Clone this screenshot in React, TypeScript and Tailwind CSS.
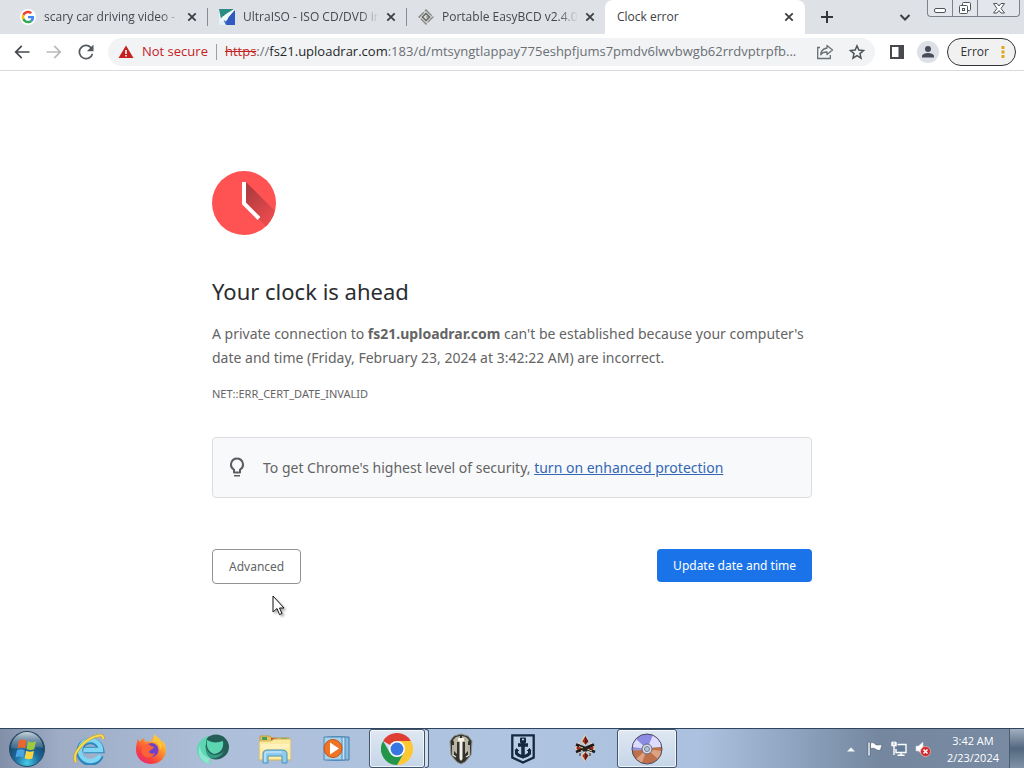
import type { ReactNode } from "react";

function GoogleG() {
  return (
    <svg viewBox="0 0 48 48" className="size-4 shrink-0">
      <circle cx="24" cy="24" r="24" fill="#fff" />
      <g transform="translate(5 5) scale(.79)">
        <path fill="#EA4335" d="M24 9.500c3.540 0 6.710 1.220 9.210 3.600l6.850-6.850C35.900 2.380 30.470 0 24 0 14.620 0 6.510 5.380 2.560 13.220l7.980 6.190C12.430 13.720 17.740 9.500 24 9.500z" />
        <path fill="#4285F4" d="M46.980 24.550c0-1.570-.15-3.090-.38-4.550H24v9.020h12.940c-.58 2.960-2.260 5.480-4.780 7.180l7.730 6c4.510-4.180 7.090-10.360 7.090-17.650z" />
        <path fill="#FBBC05" d="M10.530 28.590A14.500 14.500 0 0 1 9.770 24c0-1.600.27-3.140.76-4.590l-7.980-6.190A23.900 23.900 0 0 0 0 24c0 3.880.92 7.540 2.560 10.780l7.970-6.190z" />
        <path fill="#34A853" d="M24 48c6.480 0 11.930-2.130 15.890-5.810l-7.730-6c-2.150 1.450-4.920 2.300-8.160 2.300-6.260 0-11.570-4.220-13.470-9.910l-7.980 6.190C6.510 42.620 14.620 48 24 48z" />
      </g>
    </svg>
  );
}

function UltraIsoIcon() {
  return (
    <svg viewBox="0 0 16 16" className="size-4 shrink-0">
      <path d="M0 0h16v16H0z" fill="#e3f1f4" />
      <path d="M0 0h15L7 5 2 10z" fill="#2b8b85" />
      <path d="M16 1v15H7L5 12z" fill="#3159b8" />
      <path d="M16 0 9 9l-1 7-3-6-5 3 3-5z" fill="#f2fbfc" />
      <path d="M16 2 10 9l-4 4 2 3h8z" fill="#2f5bc0" />
    </svg>
  );
}

function EasyBcdIcon() {
  return (
    <svg viewBox="0 0 16 16" className="size-4 shrink-0" fill="none">
      <path d="M8 1 15 8 8 15 1 8z" fill="#cfd0cf" stroke="#858785" strokeWidth="1.300" strokeDasharray="8 1.500" />
      <path d="m8 4.500 3.500 3.500L8 11.500 4.500 8z" fill="#e2e2e2" stroke="#666966" strokeWidth="1.500" />
      <path d="M8 8h3" stroke="#777" />
    </svg>
  );
}

function CloseIcon() {
  return (
    <svg viewBox="0 0 16 16" className="size-4" stroke="#3c4043" strokeWidth="1.800">
      <path d="m4.300 4.300 7.400 7.400M11.700 4.300l-7.400 7.400" />
    </svg>
  );
}

function Tab({ icon, title, active }: { icon?: ReactNode; title: string; active?: boolean }) {
  return (
    <div
      role="tab"
      aria-selected={!!active}
      className={
        active
          ? "relative flex h-full w-[200px] min-w-0 items-center rounded-t-lg bg-white pr-2 pl-3"
          : "relative flex h-full w-[199px] min-w-0 items-center gap-2 pr-[7px] pl-3"
      }
    >
      {icon}
      <span
        className={
          active
            ? "min-w-0 flex-1 overflow-hidden whitespace-nowrap text-[#3c4043]"
            : "min-w-0 flex-1 overflow-hidden whitespace-nowrap text-[#45494d] [mask-image:linear-gradient(to_right,#000_86%,transparent)]"
        }
      >
        {title}
      </span>
      <button aria-label={`Close ${title}`} className="-ml-1 shrink-0">
        <CloseIcon />
      </button>
    </div>
  );
}

const Separator = () => <span className="-mr-px h-[18px] w-px shrink-0 bg-[#888d94]" />;

function TabStrip() {
  return (
    <header className="flex h-[34px] shrink-0 items-center bg-[#dee1e6] pl-2 text-[12px]">
      <div role="tablist" className="flex h-full min-w-0 items-center">
        <Tab icon={<GoogleG />} title="scary car driving video - Google Search" />
        <Separator />
        <Tab icon={<UltraIsoIcon />} title="UltraISO - ISO CD/DVD image creator" />
        <Separator />
        <Tab icon={<EasyBcdIcon />} title="Portable EasyBCD v2.4.0.237" />
        <Tab title="Clock error" active />
      </div>
      <button aria-label="New tab" className="ml-3.5 shrink-0">
        <svg viewBox="0 0 16 16" className="size-4" stroke="#33373b" strokeWidth="2">
          <path d="M8 2v12M2 8h12" />
        </svg>
      </button>
      <button aria-label="Search tabs" className="mr-3.5 ml-auto shrink-0">
        <svg viewBox="0 0 16 16" className="size-4" fill="none" stroke="#3c4043" strokeWidth="2">
          <path d="m3.500 6 4.500 4.500L12.500 6" />
        </svg>
      </button>
      <div className="mr-1 flex h-[17px] shrink-0 self-start divide-x divide-[#7c828b] overflow-hidden rounded-b border border-t-0 border-[#7c828b] bg-[#e3e6eb]">
        <button aria-label="Minimize" className="flex w-[25px] items-center justify-center">
          <svg viewBox="0 0 14 14" className="size-3.5" fill="#fff" stroke="#50555c">
            <rect x="1.500" y="7.500" width="11" height="4" rx="1.500" />
          </svg>
        </button>
        <button aria-label="Restore" className="flex w-[25px] items-center justify-center">
          <svg viewBox="0 0 14 14" className="size-3.5" fill="#fff" stroke="#50555c">
            <rect x="4.500" y="1.500" width="8" height="8" rx="1" />
            <rect x="1.500" y="4.500" width="8" height="8" rx="1" />
            <rect x="4.500" y="7.500" width="2" height="2" />
          </svg>
        </button>
        <button aria-label="Close" className="flex w-[41px] items-center justify-center">
          <svg viewBox="0 0 14 14" className="size-3.5" fill="#fff" stroke="#50555c">
            <path d="M1.500 2.500h3.500l2 2.500 2-2.500h3.500L9 7.500l3.500 4.500H9L7 9.500 5 12H1.500L5 7.500z" />
          </svg>
        </button>
      </div>
    </header>
  );
}

function ToolIcon({ d, label, color = "#55595e" }: { d: string; label: string; color?: string }) {
  return (
    <button aria-label={label} className="shrink-0">
      <svg viewBox="0 0 24 24" className="size-5" fill={color}>
        <path d={d} />
      </svg>
    </button>
  );
}

function Toolbar() {
  return (
    <nav className="flex h-[37px] shrink-0 items-center gap-3 border-b border-[#d9dadd] bg-white pr-2 pl-3">
      <ToolIcon label="Back" color="#45494d" d="M21 11H6.830l5.590-5.590L11 4l-8 8 8 8 1.410-1.410L6.830 13H21z" />
      <ToolIcon label="Forward" color="#b9babc" d="M3 11h14.170l-5.590-5.590L13 4l8 8-8 8-1.410-1.410L17.170 13H3z" />
      <ToolIcon label="Reload" d="M18.400 5.600A9 9 0 1 0 20.800 14h-2.150A6.900 6.900 0 1 1 16.900 7.100L13 11h8V3z" />
      <div className="flex h-7 min-w-0 flex-1 items-center rounded-full bg-[#f1f3f4] pr-2 pl-2.5 text-[13px]">
        <button className="flex shrink-0 items-center gap-2 text-[#c5221f]">
          <svg viewBox="0 0 16 16" className="size-4">
            <path d="M8 1.500 15.500 14H.5z" fill="#c5221f" />
            <path d="M8 6v4M8 11v1.500" stroke="#fff" strokeWidth="1.600" />
          </svg>
          Not secure
        </button>
        <span className="mx-2 h-4 w-px shrink-0 bg-[#9aa0a6]" />
        <span className="min-w-0 flex-1 overflow-hidden whitespace-nowrap text-[#6b6f74]">
          <span className="text-[#c5221f] line-through">https</span>://
          <span className="text-[#25282b]">fs21.uploadrar.com</span>
          :183/d/mtsyngtlappay775eshpfjums7pmdv6lwvbwgb62rrdvptrpfb...
        </span>
        <div className="ml-2 flex shrink-0 gap-3">
          <button aria-label="Share">
            <svg viewBox="0 0 20 20" className="size-5" fill="none" stroke="#6b6f74" strokeWidth="1.300">
              <path d="M5 5.500H2.700v11h12.600V13" />
              <path d="M12 3.500 17.500 8 12 12.500V10c-3 0-5 .7-6.300 2.800C6 9 8.500 6.500 12 6z" strokeLinejoin="round" />
            </svg>
          </button>
          <button aria-label="Bookmark">
            <svg viewBox="0 0 20 20" className="size-5" fill="none" stroke="#4f5358" strokeWidth="1.500">
              <path d="m10 3.800 1.850 4.300 4.650.4-3.530 3.070 1.060 4.550L10 13.700l-4.030 2.420 1.060-4.550L3.500 8.500l4.650-.4z" />
            </svg>
          </button>
        </div>
      </div>
      <button aria-label="Side panel" className="shrink-0">
        <svg viewBox="0 0 20 20" className="size-5">
          <path d="M3 3h14v14H3z" fill="#46494d" />
          <path d="M5 5h6.500v10H5z" fill="#fff" />
        </svg>
      </button>
      <button aria-label="Profile" className="-mx-0.5 shrink-0">
        <svg viewBox="0 0 22 22" className="size-[22px]">
          <circle cx="11" cy="11" r="11" fill="#dde0e6" />
          <circle cx="11" cy="8" r="3" fill="#474c57" />
          <path d="M5 16.500v-1.300C5 12.800 8.500 12 11 12s6 .8 6 3.200v1.300z" fill="#474c57" />
        </svg>
      </button>
      <button className="-ml-0.5 flex h-7 shrink-0 items-center gap-1.5 rounded-full border border-[#303336] bg-[#f1f1f1] pr-1 pl-3 text-[12px] text-[#303336]">
        Error
        <svg viewBox="0 0 16 16" className="size-4" fill="#e2a51e">
          <path d="M6.500 2h3v3h-3zM6.500 6.500h3v3h-3zM6.500 11h3v3h-3z" />
        </svg>
      </button>
    </nav>
  );
}

function ClockErrorPage() {
  return (
    <main className="min-h-0 flex-1 bg-white px-6 pt-[100px] text-[#646464]">
      <div className="relative mx-auto max-w-[600px] font-['Noto_Sans','Open_Sans',sans-serif]">
        <svg viewBox="0 0 64 64" className="size-16">
          <defs>
            <clipPath id="face">
              <circle cx="32" cy="32" r="32" />
            </clipPath>
            <linearGradient id="shade" gradientUnits="userSpaceOnUse" x1="34" y1="24" x2="58" y2="52">
              <stop offset="0" stopColor="#b33c40" />
              <stop offset="1" stopColor="#ee4c4e" />
            </linearGradient>
          </defs>
          <circle cx="32" cy="32" r="32" fill="#ff5252" />
          <path d="M34 11 68 45 58 60 46 47 34 34z" fill="url(#shade)" clipPath="url(#face)" />
          <path d="M32 11v21.500l15 15" fill="none" stroke="#fff" strokeWidth="4" />
        </svg>
        <h1 className="mt-[42px] text-[22px] leading-7 text-[#2b2d30]">Your clock is ahead</h1>
        <p className="mt-[17px] text-[14px] leading-6">
          A private connection to <strong className="font-bold">fs21.uploadrar.com</strong> can't be established because your computer's
          date and time (Friday, February 23, 2024 at 3:42:22 AM) are incorrect.
        </p>
        <p className="mt-4 text-[11px] leading-4">NET::ERR_CERT_DATE_INVALID</p>
        <div className="mt-[35px] flex items-center gap-3.5 rounded border border-[#dadce0] bg-[#f8f9fb] px-3 py-[17px] text-[14px] leading-[25px]">
          <svg viewBox="0 0 24 24" className="size-6 shrink-0" fill="#5b5f64">
            <path d="M9 19h6v1.600H9zM12 1.500a7 7 0 0 0-4 12.740V16.500a1 1 0 0 0 1 1h6a1 1 0 0 0 1-1v-2.260A7 7 0 0 0 12 1.500zm2.850 11.100-.85.600V15.500h-4v-2.300l-.85-.6a5 5 0 1 1 5.700 0z" />
          </svg>
          <p>
            To get Chrome's highest level of security,{" "}
            <a href="#protection" className="text-[#3367b5] underline">
              turn on enhanced protection
            </a>
          </p>
        </div>
        <div className="mt-[51px] flex items-start justify-between text-[12px]">
          <button className="h-[35px] rounded border border-[#909296] px-4">Advanced</button>
          <button className="h-[33px] rounded bg-[#1a73e8] px-4 text-white">Update date and time</button>
        </div>
        <svg viewBox="0 0 14 21" className="absolute top-[424px] left-[60px] h-[21px] w-3.5 drop-shadow-[2px_2px_1px_rgba(0,0,0,0.3)]">
          <path d="M1 1v16l4-3.500 2.500 6 2.500-1-2.500-5.500H12z" fill="#fff" stroke="#111" />
        </svg>
      </div>
    </main>
  );
}

function StartOrb() {
  return (
    <svg viewBox="0 0 38 38" className="size-[38px]">
      <defs>
        <radialGradient id="orb" cx=".5" cy=".9" r=".8">
          <stop offset="0" stopColor="#43cde8" />
          <stop offset=".45" stopColor="#1d689b" />
          <stop offset="1" stopColor="#173857" />
        </radialGradient>
        <linearGradient id="gloss" x1="0" y1="0" x2="0" y2="1">
          <stop offset="0" stopColor="#e8f0f4" stopOpacity=".85" />
          <stop offset="1" stopColor="#8fb1c5" stopOpacity=".25" />
        </linearGradient>
      </defs>
      <circle cx="19" cy="19" r="17.500" fill="url(#orb)" stroke="#274b68" />
      <path d="M3 18a16 16 0 0 1 32 0c-9-3-21 3-32 0z" fill="url(#gloss)" />
      <path d="M11 10.500c3-1.500 5-1.300 7.500 0L17 18.500c-3-1.300-5-1.300-7.500-.2z" fill="#ec652c" />
      <path d="M20 11.300c2.500 1.300 5 1.200 8 0l-1.700 8c-3 1.200-5.300 1-7.800-.2z" fill="#9fc93c" />
      <path d="M9 20c3-1.200 5-1 7.700.2l-1.500 7.300c-2.600-1.200-4.700-1.200-7.700 0z" fill="#4ba5e5" />
      <path d="M18.200 20.800c2.600 1.200 4.800 1.300 7.800.2l-1.600 7.500c-3 1.200-5.100 1-7.800-.3z" fill="#fbd343" />
    </svg>
  );
}

function ExplorerE() {
  return (
    <svg viewBox="0 0 32 32" className="size-8" fill="none">
      <path d="M27.500 22.500A10.800 10.800 0 1 1 28 17H11" stroke="#2b86be" strokeWidth="6.500" />
      <path d="M27 22A10.500 10.500 0 1 1 28 17H11" stroke="#7fd5f3" strokeWidth="4.500" />
      <path d="M3 29C-2 21 12 5 26 2.500c3-.5 4.500.5 4 3.500" stroke="#c89a24" strokeWidth="3" />
      <path d="M3 29C-2 21 12 5 26 2.500c3-.5 4.500.5 4 3.500" stroke="#fae04f" strokeWidth="1.800" />
    </svg>
  );
}

function Firefox() {
  return (
    <svg viewBox="0 0 32 32" className="size-8">
      <defs>
        <linearGradient id="fox" x1="1" y1="0" x2=".2" y2="1">
          <stop offset="0" stopColor="#fff34f" />
          <stop offset=".4" stopColor="#ff9a2b" />
          <stop offset=".75" stopColor="#f9433b" />
          <stop offset="1" stopColor="#e8267e" />
        </linearGradient>
      </defs>
      <path d="M20 1c1 3 5 4 7 8l1-1c2 3 3 6 3 9a15 14 0 0 1-30 0c0-5 1-8 2-11l2 3c1-2 2-3 4-4l1 4c2-1 4-1 6 0 1-2 2-5 4-8z" fill="url(#fox)" />
      <circle cx="16.500" cy="17" r="7" fill="#7041c9" />
      <path d="M8 13c3-3 6-2 8 0l3 1c-1 3-4 2-5 5 1 2 4 2 6 1-1 4-7 6-11 3-3-3-3-7-1-10z" fill="#fb6237" />
      <path d="M17 9c5-1 8 3 8 8l2-4c-1-5-4-8-7-10-1 3-2 4-3 6z" fill="#ffc53a" />
    </svg>
  );
}

function TealSwirl() {
  return (
    <svg viewBox="0 0 32 32" className="size-8">
      <ellipse cx="19" cy="14" rx="13" ry="12.500" fill="#245f57" />
      <path d="M11 3C1 6-3 17 2 24c3 5 8 7 13 7-3-2-4-4-2-6-4-4-5-10-4-14 0-3 1-6 2-8z" fill="#5fd6b3" />
      <path d="M10 7c5 3 10 3 16 1 1 7-2 12-9 13C11 19 9 13 10 7z" fill="#5bd6b0" />
      <path d="M9 13c1 5 3 8 8 9 5 0 8-2 10-4-3 6-8 8-14 7-3-3-4-7-4-12z" fill="#349c83" />
      <path d="M3 12c0 7 4 12 10 13-2 2-2 4 1 6C4 30-1 21 3 12z" fill="#8ce5cd" />
    </svg>
  );
}

function FolderIcon() {
  return (
    <svg viewBox="0 0 32 32" className="size-8">
      <path d="M1 6V3h10l2 2h17v20H1z" fill="#e5c55c" stroke="#b99d45" />
      <path d="M3 4h5v3H3zM22 5h6v4h-6z" fill="#4a9c65" />
      <path d="M12 5h6v4h-6z" fill="#c6503b" />
      <path d="M0 8h12l3-2h17v21H0z" fill="#fbeaa0" stroke="#d3b453" />
      <path d="M2 11h28v5H2z" fill="#fff3bb" />
      <path d="M4 30V21c0-3 2-4 5-4h14c3 0 5 1 5 4v9h-5v-7H9v7z" fill="#8fcbed" stroke="#4a93bd" />
      <path d="M6 29v-8c0-2 1-2 3-2h14" fill="none" stroke="#d3f1ff" />
    </svg>
  );
}

function MediaPlayer() {
  return (
    <svg viewBox="0 0 32 32" className="size-8">
      <path d="M10 4h18v23H10z" fill="#8abbe0" stroke="#3e7cab" />
      <path d="M6 4h18v23H6z" fill="#c5e3f6" stroke="#4a87b4" />
      <path d="M3 4h18v23H3z" fill="#a7d2ec" stroke="#4a87b4" />
      <circle cx="12" cy="15.500" r="9" fill="#ef7425" stroke="#c6551c" />
      <path d="m9 9.500 9 6-9 6z" fill="#fff" />
    </svg>
  );
}

function ChromeIcon() {
  return (
    <svg viewBox="0 0 48 48" className="size-8">
      <path d="M24 24 3.200 12A24 24 0 0 1 44.800 12H24z" fill="#df3e32" />
      <path d="M24 12h20.800A24 24 0 0 1 24 48l10.400-18z" fill="#fcc934" />
      <path d="M3.200 12 13.600 30 24 36l10.400-6L24 48A24 24 0 0 1 3.200 12z" fill="#24964a" />
      <circle cx="24" cy="24" r="12" fill="#fff" />
      <circle cx="24" cy="24" r="9.700" fill="#3877e2" />
    </svg>
  );
}

function TanksIcon() {
  return (
    <svg viewBox="0 0 32 32" className="size-8">
      <path d="M9 3 16 1l7 2 4 5-1 14-6 7-4 2-4-2-6-7L5 8z" fill="#33332e" stroke="#8f9189" />
      <path d="M8 7l3-3 4-1v6h-3v12l-3-3V9zM24 7l-3-3-4-1v6h3v12l3-3V9z" fill="#b9b6a6" />
      <path d="M13 5h6v3h-1.500v18L16 28l-1.500-2V8H13z" fill="#f3f1e7" />
      <path d="M8 12v10l3 2M24 12v10l-3 2" fill="none" stroke="#dedbcd" strokeWidth="1.500" />
    </svg>
  );
}

function AnchorIcon() {
  return (
    <svg viewBox="0 0 32 32" className="size-8" fill="none" stroke="#14283f">
      <path d="M5.300 2.300h21.400v22.200L16 29.500 5.300 24.500z" fill="#b9cee5" strokeWidth="2.300" />
      <path d="M13.500 5h5v4.500h-5z" fill="#14283f" strokeWidth="1" />
      <path d="M15 6.500h2" stroke="#b9cee5" strokeWidth="1.500" />
      <path d="M16 9v14M11 12h10" strokeWidth="3.500" />
      <path d="M9.500 17v3.500c2 2.500 4 2.500 6.500 3.500 2.500-1 4.500-1 6.500-3.500V17" strokeWidth="3" />
      <path d="m8 18 1.500-2.500L12 18M24 18l-1.500-2.500L20 18" fill="#14283f" />
    </svg>
  );
}

function DiamondEmblem() {
  return (
    <svg viewBox="0 0 32 32" className="size-8">
      <path d="m16 2.500 3.500 6L16 12l-3.500-3.500zM16 28l3.500-5.500L16 19l-3.500 3.500zM6.500 15 10 10l3.500 4.500L10 20zM25.500 15 22 10l-3.500 4.500L22 20z" fill="#a72b25" stroke="#e9d5b0" strokeWidth="1.200" />
      <path d="m16 2.500 3.500 6L16 12zM16 28l3.500-5.500L16 19z" fill="#5e1918" />
      <path d="m7 11.500 19 7.500M25 11.500 7 19" stroke="#1d1b1a" strokeWidth="2.600" />
      <path d="m10 13.500 4 1.500M18 16l5 2M12 18l3-1.500" stroke="#e5ca91" />
      <path d="M11 20v3M21 20v3M14 15h4v3h-4z" fill="#29221f" stroke="#29221f" />
    </svg>
  );
}

function DiscIcon() {
  return (
    <svg viewBox="0 0 32 32" className="size-8">
      <circle cx="16" cy="16" r="15" fill="#a6a0bd" />
      <path d="M1 16a15 15 0 0 1 30 0c-10-3-20 2-30 0z" fill="#8d8ce5" />
      <path d="M16 16 1 14a15 15 0 0 1 4-8zM16 16 22 2a15 15 0 0 1 9 13z" fill="#dbdcff" />
      <path d="M1 17a15 15 0 0 0 30-3c-10-1-20 5-30 3z" fill="#bd7049" />
      <path d="M16 16 5 26a15 15 0 0 0 6 4zM16 16l15 2a15 15 0 0 1-4 8z" fill="#dca283" />
      <circle cx="16" cy="16" r="15" fill="none" stroke="#4e4960" />
      <circle cx="16" cy="16" r="5" fill="#d7dce8" stroke="#62647a" />
      <circle cx="16" cy="16" r="2.500" fill="#b3c5dc" stroke="#7a7d91" />
    </svg>
  );
}

function Task({ label, children, open, stacked }: { label: string; children: ReactNode; open?: boolean; stacked?: boolean }) {
  return (
    <button
      aria-label={label}
      className={
        open
          ? "flex h-full w-[62px] items-center justify-center px-px"
          : "flex h-full w-[62px] items-center justify-center"
      }
    >
      {open ? (
        <span className="flex h-full flex-1">
          <span className="flex h-full flex-1 items-center justify-center rounded-[3px] border border-[#40546e] bg-gradient-to-b from-[#dfe8f2] to-[#c5d5e8] inset-ring inset-ring-white/70">
            {children}
          </span>
          {stacked && <span className="h-full w-1 rounded-r-[3px] border border-l-0 border-[#40546e] bg-[#d5e0ec]" />}
        </span>
      ) : (
        children
      )}
    </button>
  );
}

function Taskbar() {
  return (
    <footer className="flex h-10 shrink-0 items-center overflow-hidden border-t border-[#2f455e] bg-[linear-gradient(to_right,#8190a8_0,#9eacc5_60px,#aebfda_220px,#aec4e0_500px,#abc1df_700px,#8ca2bd_800px,#74879f_880px,#788ba2_100%)]">
      <button aria-label="Start" className="flex w-[58px] shrink-0 justify-center pr-1">
        <StartOrb />
      </button>
      <Task label="Internet Explorer"><ExplorerE /></Task>
      <Task label="Firefox"><Firefox /></Task>
      <Task label="Web browser"><TealSwirl /></Task>
      <Task label="File Explorer"><FolderIcon /></Task>
      <Task label="Media Player"><MediaPlayer /></Task>
      <Task label="Chrome" open stacked><ChromeIcon /></Task>
      <Task label="Tanks"><TanksIcon /></Task>
      <Task label="Warships"><AnchorIcon /></Task>
      <Task label="Game"><DiamondEmblem /></Task>
      <Task label="Disc" open><DiscIcon /></Task>
      <div className="ml-auto flex h-full shrink-0 items-center text-[11px] text-white">
        <div className="flex items-center gap-2">
          <button aria-label="Show hidden icons">
            <svg viewBox="0 0 16 16" className="size-4"><path d="M4 10.500 8 6.500l4 4z" fill="#f4f8fc" /></svg>
          </button>
          <button aria-label="Action center">
            <svg viewBox="0 0 16 16" className="size-4" fill="#fff" stroke="#4c5c70" strokeWidth=".6">
              <path d="M1 1h2v14H1zM3.500 2C6 1 7 2 8.500 3.500c2 .8 4 .5 6.500 0L13.500 9c-2 .7-3.500.3-5-1-1.500-1-3-.8-5-.3z" />
            </svg>
          </button>
          <button aria-label="Network">
            <svg viewBox="0 0 16 16" className="size-4" fill="none" stroke="#fff" strokeWidth="1.400">
              <path d="M6.500 3.500H15v8H5V8" fill="#657c96" />
              <path d="M10 11.500V14M6.500 14.300h7M1 1v3.500h4V1M3 4.500V14M2 .5v3M4 .5v3" />
            </svg>
          </button>
          <button aria-label="Volume muted">
            <svg viewBox="0 0 16 16" className="size-4">
              <path d="M1 5h2.500L8 1v13l-4.500-4H1z" fill="#fff" stroke="#cad5e1" strokeWidth=".6" />
              <circle cx="10.500" cy="10.500" r="5" fill="#cf2a2d" stroke="#f3bcbc" strokeWidth=".7" />
              <path d="m8.500 8.500 4 4M12.500 8.500l-4 4" stroke="#fff" strokeWidth="1.500" />
            </svg>
          </button>
        </div>
        <time className="ml-4 text-center leading-[17px]">
          3:42 AM
          <br />
          2/23/2024
        </time>
        <button aria-label="Show desktop" className="ml-2.5 h-full w-[15px] border-l border-[#4a5d73] bg-gradient-to-b from-[#a2b0c0] via-[#53687f] to-[#7f92a6]" />
      </div>
    </footer>
  );
}

export default function App() {
  return (
    <div className="flex h-screen flex-col overflow-hidden bg-white font-['Open_Sans','Noto_Sans',sans-serif]">
      <TabStrip />
      <Toolbar />
      <ClockErrorPage />
      <Taskbar />
    </div>
  );
}
